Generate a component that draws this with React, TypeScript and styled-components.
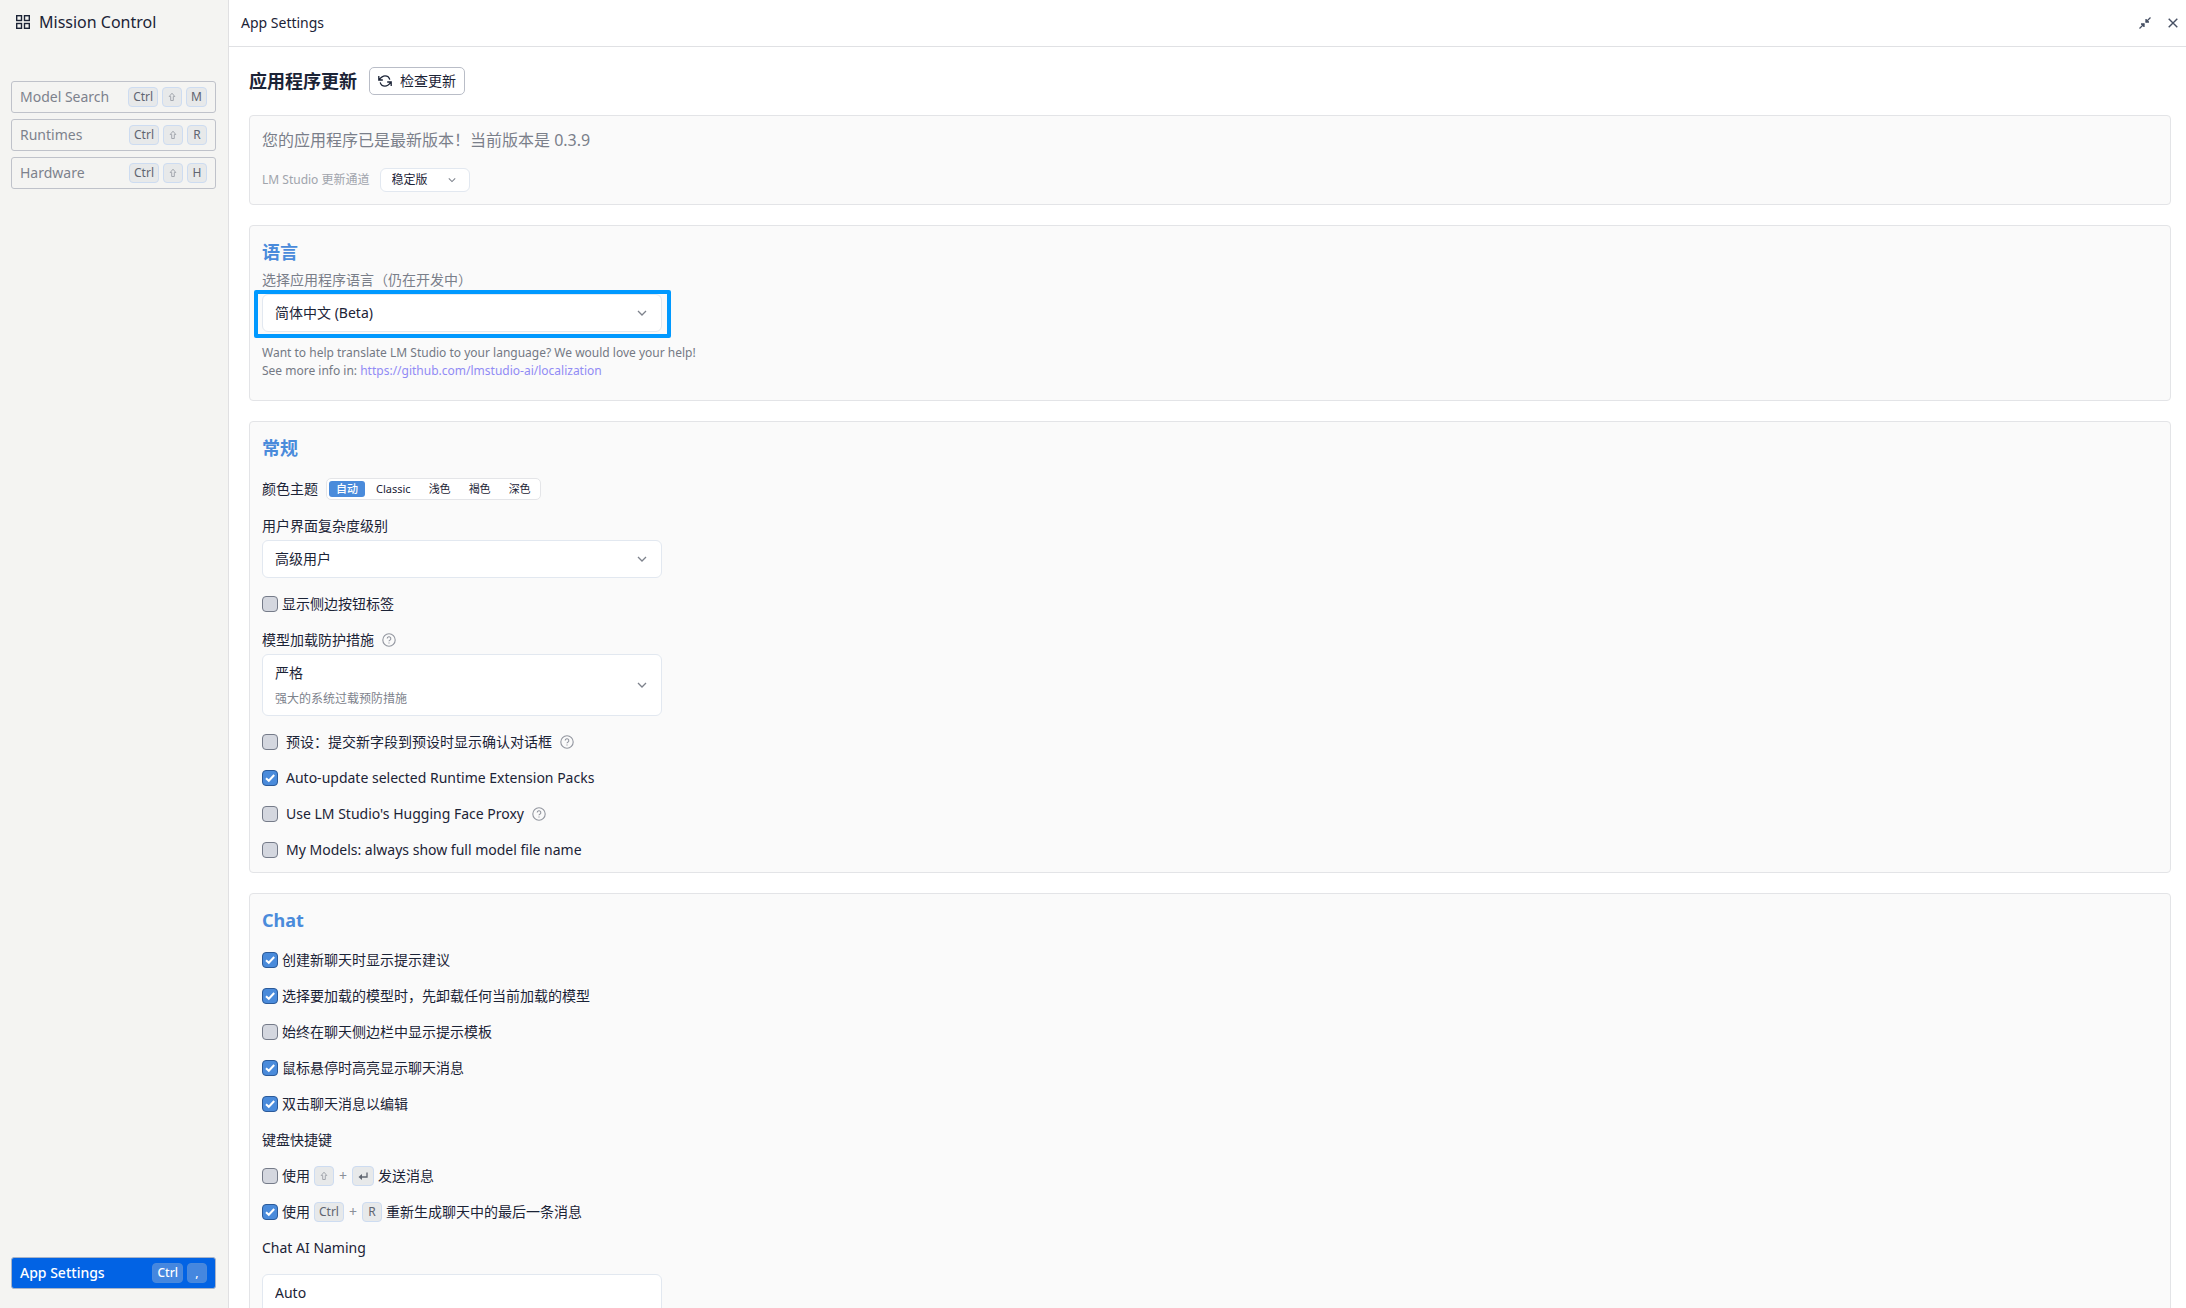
import React, { useId, useState } from "react";
import styled, { createGlobalStyle } from "styled-components";

const Global = createGlobalStyle`
  * { box-sizing: border-box; }
  body {
    margin: 0;
    background: #fff;
    color: #1b2336;
    font-family: "Noto Sans", "Noto Sans CJK SC", sans-serif;
    font-size: 14px;
    line-height: 20px;
  }
  button, select, input { font: inherit; color: inherit; margin: 0; }
  h1, h2, p { margin: 0; }
`;

const Shell = styled.div`
  display: grid;
  grid-template-columns: 229px 1fr;
  height: 100vh;
  overflow: hidden;
`;

const Sidebar = styled.nav`
  display: flex;
  flex-direction: column;
  padding: 10px 12px 19px 11px;
  background: #f4f4f2;
  border-right: 1px solid #e0e0e2;
`;

const Brand = styled.div`
  display: flex;
  align-items: center;
  gap: 9px;
  padding-left: 5px;
  margin-bottom: 47px;
  font-size: 16px;
  line-height: 24px;
`;

const NavList = styled.div`
  display: flex;
  flex-direction: column;
  gap: 6px;
  flex: 1;
`;

const NavButton = styled.button<{ $active?: boolean }>`
  display: flex;
  align-items: center;
  justify-content: space-between;
  height: 32px;
  padding: 0 8px;
  border: 1px solid ${(p) => (p.$active ? "#a9b4c8" : "#bfc2ca")};
  border-radius: 3px;
  background: ${(p) => (p.$active ? "#0263e4" : "transparent")};
  color: ${(p) => (p.$active ? "#fff" : "#7d828d")};
  font-weight: ${(p) => (p.$active ? 500 : 400)};
  text-align: left;
`;

const Keys = styled.span`
  display: flex;
  gap: 4px;
`;

const Keycap = styled.kbd<{ $active?: boolean; $faint?: boolean }>`
  display: inline-flex;
  align-items: center;
  justify-content: center;
  min-width: 20px;
  height: 20px;
  padding: 0 4px;
  border: 1px solid ${(p) => (p.$active ? "#4a89dc" : "#cddcf1")};
  border-radius: 4px;
  background: ${(p) => (p.$active ? "#4587df" : "#e7e9ea")};
  color: ${(p) => (p.$active ? "#fff" : p.$faint ? "#a3a7ae" : "#5f6570")};
  font-family: inherit;
  font-size: 12px;
  line-height: 18px;
`;

const Main = styled.main`
  display: flex;
  flex-direction: column;
  min-width: 0;
  min-height: 0;
`;

const TopBar = styled.header`
  display: flex;
  align-items: center;
  height: 47px;
  flex: none;
  padding: 0 6px 0 12px;
  border-bottom: 1px solid #e0e1e4;
`;

const TopTitle = styled.h1`
  flex: 1;
  font-size: 14px;
  font-weight: 400;
`;

const IconButton = styled.button`
  display: grid;
  place-items: center;
  width: 28px;
  height: 28px;
  padding: 0;
  border: 0;
  background: none;
  color: #475064;
  & + & { width: 14px; margin-left: 7px; }
`;

const Content = styled.div`
  flex: 1;
  min-height: 0;
  overflow: auto;
  scrollbar-width: none;
  display: flex;
  flex-direction: column;
  gap: 20px;
  padding: 20px 15px 20px 20px;
`;

const UpdateHead = styled.div`
  display: flex;
  align-items: center;
  gap: 12px;
`;

const PageHeading = styled.h2`
  font-size: 18px;
  line-height: 28px;
  font-weight: 700;
`;

const OutlineButton = styled.button`
  display: flex;
  align-items: center;
  gap: 8px;
  height: 28px;
  padding: 0 8px;
  border: 1px solid #b9bdc7;
  border-radius: 5px;
  background: #fff;
`;

const Card = styled.section`
  flex: none;
  padding: 12px;
  border: 1px solid #e3e4e7;
  border-radius: 4px;
  background: #fafafa;
`;

const CardTitle = styled.h2<{ $tight?: boolean }>`
  margin-bottom: ${(p) => (p.$tight ? 4 : 16)}px;
  color: #4a8bdb;
  font-size: 18px;
  line-height: 28px;
  font-weight: 700;
`;

const Stack = styled.div`
  display: flex;
  flex-direction: column;
  gap: 16px;
`;

const Field = styled.div`
  display: flex;
  flex-direction: column;
  gap: 4px;
`;

const Status = styled.p`
  color: #7a7f8a;
  font-size: 16px;
  line-height: 24px;
`;

const Channel = styled.div`
  display: flex;
  align-items: center;
  gap: 10px;
  margin-top: 16px;
  color: #a0a4ac;
  font-size: 12px;
`;

const Caption = styled.label`
  color: #7a7f8a;
  line-height: 20px;
`;

const Label = styled.label`
  display: flex;
  align-items: center;
  gap: 8px;
  line-height: 20px;
`;

const Hint = styled.p`
  margin-top: 12px;
  margin-bottom: 8px;
  color: #747984;
  font-size: 12px;
  line-height: 18px;
  a { color: #918bf5; text-decoration: none; }
`;

const Box = styled.div<{ $small?: boolean; $ring?: boolean; $roomy?: boolean }>`
  position: relative;
  display: grid;
  grid-template-columns: 1fr ${(p) => (p.$small ? 34 : 39)}px;
  grid-template-rows: auto 1fr;
  width: 100%;
  max-width: ${(p) => (p.$small ? 90 : 400)}px;
  min-height: ${(p) => (p.$roomy ? "84px" : "auto")};
  border: 1px solid #e2e8f0;
  border-radius: 6px;
  background: #fff;
  color: #1b2336;
  ${(p) =>
    p.$ring &&
    `&::after {
      content: "";
      position: absolute;
      inset: -5px -10px -7px -9px;
      border: 4px solid #0099ff;
      border-radius: 2px;
      pointer-events: none;
    }`}
`;

const Native = styled.select<{ $small?: boolean }>`
  grid-area: 1 / 1 / 2 / 3;
  appearance: none;
  height: ${(p) => (p.$small ? 22 : 36)}px;
  padding: ${(p) => (p.$small ? "0 11px" : "0 12px")};
  border: 0;
  outline: 0;
  background: transparent;
`;

const Sub = styled.span`
  grid-area: 2 / 1 / 3 / 2;
  padding: 0 12px 8px;
  color: #7d828c;
  font-size: 12px;
  line-height: 16px;
`;

const Caret = styled.svg`
  grid-area: 1 / 2 / 3 / 3;
  place-self: center;
  color: #7d828c;
  pointer-events: none;
`;

const Theme = styled.div`
  display: flex;
  align-items: center;
  gap: 8px;
`;

const Segments = styled.div`
  display: flex;
  gap: 4px;
  padding: 2px;
  border: 1px solid #e4e5e8;
  border-radius: 5px;
  background: #fff;
`;

const Segment = styled.button<{ $on?: boolean }>`
  height: 16px;
  padding: 0 7px;
  border: 0;
  border-radius: 3px;
  background: ${(p) => (p.$on ? "#4a8bdb" : "transparent")};
  color: ${(p) => (p.$on ? "#fff" : "#1b2336")};
  font-size: 11px;
  line-height: 16px;
  font-weight: ${(p) => (p.$on ? 500 : 400)};
`;

const CheckRow = styled.div<{ $gap: number }>`
  display: flex;
  align-items: center;
  gap: ${(p) => p.$gap}px;
  min-height: 20px;
`;

const CheckLabel = styled.label`
  display: flex;
  align-items: center;
  gap: 4px;
`;

const Tick = styled.span`
  display: grid;
  flex: none;
  svg { grid-area: 1 / 1; place-self: center; pointer-events: none; }
`;

const Tickbox = styled.input`
  grid-area: 1 / 1;
  appearance: none;
  width: 16px;
  height: 16px;
  border: 1px solid #757b89;
  border-radius: 4px;
  background: #d4d7df;
  &:checked { background: #4a8bdb; border-color: #2b5a99; }
`;

const Plus = styled.span`
  margin: 0 1px;
  color: #8b9099;
`;

const HelpIcon = styled.svg`
  flex: none;
  color: #92969f;
`;

const Chevron = ({ size = 10 }: { size?: number }) => (
  <Caret width={size} height={size} viewBox="0 0 10 10" fill="none" stroke="currentColor" strokeWidth="1.3">
    <path d="M1 3l4 4 4-4" />
  </Caret>
);

const Help = () => (
  <HelpIcon width="14" height="14" viewBox="0 0 14 14" fill="none" stroke="currentColor" strokeWidth="1.1">
    <circle cx="7" cy="7" r="6.2" />
    <path d="M5.2 5.6a1.8 1.8 0 1 1 2.6 1.6c-.6.3-.8.5-.8 1.1M7 9.4v1.2" />
  </HelpIcon>
);

const Kbd = ({ name, active }: { name: string; active?: boolean }) => {
  if (name === "Shift")
    return (
      <Keycap $faint aria-label="Shift">
        <svg width="8" height="10" viewBox="0 0 8 10" fill="none" stroke="currentColor" strokeWidth="1">
          <path d="M4 1.2L1.2 4.5h1.500v4h2.600v-4h1.500z" />
        </svg>
      </Keycap>
    );
  if (name === "Enter")
    return (
      <Keycap aria-label="Enter">
        <svg width="12" height="10" viewBox="0 0 12 10" fill="none" stroke="currentColor" strokeWidth="1.3">
          <path d="M10 1.5V6H3" />
          <path d="M5 3L1.5 6 5 9z" fill="currentColor" stroke="none" />
        </svg>
      </Keycap>
    );
  return <Keycap $active={active}>{name}</Keycap>;
};

type SelectProps = {
  id: string;
  value: string;
  small?: boolean;
  ring?: boolean;
  roomy?: boolean;
  sub?: string;
};

const Select = ({ id, value, small, ring, roomy, sub }: SelectProps) => (
  <Box $small={small} $ring={ring} $roomy={roomy}>
    <Native id={id} $small={small} defaultValue={value}>
      <option>{value}</option>
    </Native>
    {sub && <Sub>{sub}</Sub>}
    <Chevron size={small ? 8 : 10} />
  </Box>
);

type CheckProps = { on?: boolean; wide?: boolean; help?: boolean; children: React.ReactNode };

const Check = ({ on, wide, help, children }: CheckProps) => {
  const id = useId();
  const [checked, setChecked] = useState(!!on);
  return (
    <CheckRow $gap={wide ? 8 : 4}>
      <Tick>
        <Tickbox id={id} type="checkbox" checked={checked} onChange={() => setChecked(!checked)} />
        {checked && (
          <svg width="16" height="16" viewBox="0 0 16 16" fill="none" stroke="#fff" strokeWidth="2">
            <path d="M4 8.2l2.8 2.6L12.2 5" />
          </svg>
        )}
      </Tick>
      <CheckLabel htmlFor={id}>{children}</CheckLabel>
      {help && <Help />}
    </CheckRow>
  );
};

const NAV = [
  { label: "Model Search", keys: ["Ctrl", "Shift", "M"] },
  { label: "Runtimes", keys: ["Ctrl", "Shift", "R"] },
  { label: "Hardware", keys: ["Ctrl", "Shift", "H"] },
];

const THEMES = ["自动", "Classic", "浅色", "褐色", "深色"];

const NavItem = ({ label, keys, active }: { label: string; keys: string[]; active?: boolean }) => (
  <NavButton $active={active}>
    {label}
    <Keys>
      {keys.map((k) => (
        <Kbd key={k} name={k} active={active} />
      ))}
    </Keys>
  </NavButton>
);

export default function App() {
  const [theme, setTheme] = useState(THEMES[0]);
  return (
    <>
      <Global />
      <Shell>
        <Sidebar>
          <Brand>
            <svg width="14" height="14" viewBox="0 0 14 14" fill="none" stroke="currentColor" strokeWidth="1.4">
              <rect x=".7" y=".7" width="4.8" height="4.8" />
              <rect x="8.5" y=".7" width="4.8" height="4.8" />
              <rect x=".7" y="8.5" width="4.8" height="4.8" />
              <rect x="8.5" y="8.5" width="4.8" height="4.8" />
            </svg>
            Mission Control
          </Brand>
          <NavList>
            {NAV.map((n) => (
              <NavItem key={n.label} {...n} />
            ))}
          </NavList>
          <NavItem label="App Settings" keys={["Ctrl", ","]} active />
        </Sidebar>
        <Main>
          <TopBar>
            <TopTitle>App Settings</TopTitle>
            <IconButton aria-label="Collapse">
              <svg width="12" height="12" viewBox="0 0 12 12" fill="none" stroke="currentColor" strokeWidth="1.3">
                <path d="M11.5.5L7 5M.5 11.5L5 7" />
                <path d="M7 2v3h3M5 10V7H2" fill="currentColor" />
              </svg>
            </IconButton>
            <IconButton aria-label="Close">
              <svg width="10" height="10" viewBox="0 0 10 10" fill="none" stroke="currentColor" strokeWidth="1.4">
                <path d="M.7.7l8.6 8.6M9.3.7L.7 9.3" />
              </svg>
            </IconButton>
          </TopBar>
          <Content>
            <UpdateHead>
              <PageHeading>应用程序更新</PageHeading>
              <OutlineButton>
                <svg width="14" height="14" viewBox="0 0 14 14" fill="none" stroke="currentColor" strokeWidth="1.3">
                  <path d="M.8 2v4h4M1 5.8C2.5 4 4.200 1.900 7 1.900a5 5 0 0 1 4.800 3.800" />
                  <path d="M13.200 12V8h-4M13 8.200C11.500 10 9.800 12.100 7 12.100a5 5 0 0 1-4.800-3.800" />
                </svg>
                检查更新
              </OutlineButton>
            </UpdateHead>
            <Card>
              <Status>您的应用程序已是最新版本！当前版本是 0.3.9</Status>
              <Channel>
                <label htmlFor="channel">LM Studio 更新通道</label>
                <Select id="channel" value="稳定版" small />
              </Channel>
            </Card>
            <Card>
              <CardTitle $tight>语言</CardTitle>
              <Field>
                <Caption htmlFor="language">选择应用程序语言（仍在开发中）</Caption>
                <Select id="language" value="简体中文 (Beta)" ring />
              </Field>
              <Hint>
                Want to help translate LM Studio to your language? We would love your help!
                <br />
                See more info in: <a href="https://github.com/lmstudio-ai/localization">https://github.com/lmstudio-ai/localization</a>
              </Hint>
            </Card>
            <Card>
              <CardTitle>常规</CardTitle>
              <Stack>
                <Theme>
                  <span>颜色主题</span>
                  <Segments>
                    {THEMES.map((t) => (
                      <Segment key={t} $on={t === theme} onClick={() => setTheme(t)}>{t}</Segment>
                    ))}
                  </Segments>
                </Theme>
                <Field>
                  <Label htmlFor="level">用户界面复杂度级别</Label>
                  <Select id="level" value="高级用户" />
                </Field>
                <Check>显示侧边按钮标签</Check>
                <Field>
                  <Label htmlFor="guard">模型加载防护措施<Help /></Label>
                  <Select id="guard" value="严格" sub="强大的系统过载预防措施" />
                </Field>
                <Check wide help>预设：提交新字段到预设时显示确认对话框</Check>
                <Check wide on>Auto-update selected Runtime Extension Packs</Check>
                <Check wide help>Use LM Studio's Hugging Face Proxy</Check>
                <Check wide>My Models: always show full model file name</Check>
              </Stack>
            </Card>
            <Card>
              <CardTitle>Chat</CardTitle>
              <Stack>
                <Check on>创建新聊天时显示提示建议</Check>
                <Check on>选择要加载的模型时，先卸载任何当前加载的模型</Check>
                <Check>始终在聊天侧边栏中显示提示模板</Check>
                <Check on>鼠标悬停时高亮显示聊天消息</Check>
                <Check on>双击聊天消息以编辑</Check>
                <span>键盘快捷键</span>
                <Check>
                  使用 <Kbd name="Shift" /><Plus>+</Plus><Kbd name="Enter" /> 发送消息
                </Check>
                <Check on>
                  使用 <Kbd name="Ctrl" /><Plus>+</Plus><Kbd name="R" /> 重新生成聊天中的最后一条消息
                </Check>
                <Label htmlFor="naming">Chat AI Naming</Label>
                <Select id="naming" value="Auto" roomy />
              </Stack>
            </Card>
          </Content>
        </Main>
      </Shell>
    </>
  );
}
